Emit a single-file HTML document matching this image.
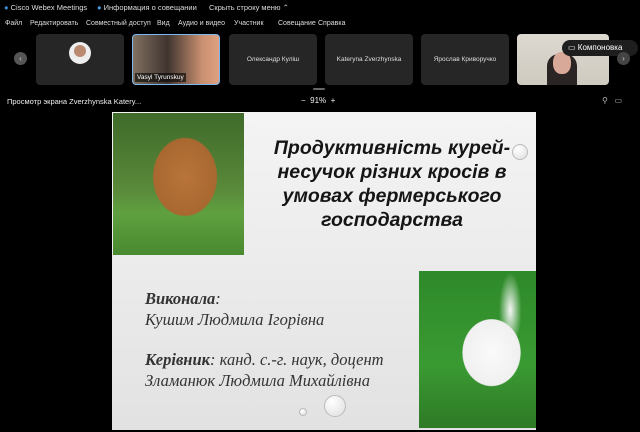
<!DOCTYPE html>
<html><head><meta charset="utf-8"><style>
*{margin:0;padding:0;box-sizing:border-box}
body{width:640px;height:432px;background:#000;overflow:hidden;position:relative;font-family:"Liberation Sans",sans-serif;color:#ddd}
.t{position:absolute;white-space:nowrap}
.m{position:absolute;top:20px;font-size:7px;white-space:nowrap;color:#ddd}
.tile{position:absolute;top:34px;height:51px;width:88px;background:#262626;border-radius:4px;font-size:6.5px;color:#ddd;display:flex;align-items:center;justify-content:center}
.slide{position:absolute;left:112px;top:112px;width:424px;height:318px;background:linear-gradient(180deg,#f4f4f4,#e2e2e2)}
.ti{position:absolute;left:140px;top:24px;width:280px;text-align:center;font-weight:bold;font-style:italic;font-size:19.5px;line-height:24px;color:#151515}
.sr{font-family:"Liberation Serif",serif;font-style:italic;font-size:16.5px;color:#333}
.bub{position:absolute;border-radius:50%;border:1px solid #bbb;background:radial-gradient(circle at 35% 30%,#fff,#ddd)}
</style></head><body>
<div class="t" style="left:4px;top:3px;font-size:7.5px;color:#ddd"><span style="color:#3a8fd8">●</span> Cisco Webex Meetings</div>
<div class="t" style="left:97px;top:3px;font-size:7.5px"><span style="color:#4a9be0">●</span> Информация о совещании</div>
<div class="t" style="left:209px;top:3px;font-size:7.5px">Скрыть строку меню ⌃</div>
<div class="m" style="left:5px">Файл</div><div class="m" style="left:30px">Редактировать</div><div class="m" style="left:86px">Совместный доступ</div><div class="m" style="left:157px">Вид</div><div class="m" style="left:178px">Аудио и видео</div><div class="m" style="left:234px">Участник</div><div class="m" style="left:278px">Совещание</div><div class="m" style="left:318px">Справка</div>
<div style="position:absolute;left:14px;top:52px;width:13px;height:13px;border-radius:50%;background:#555;color:#ccc;font-size:8px;text-align:center;line-height:13px">‹</div>
<div class="tile" style="left:36px"><div style="width:22px;height:22px;border-radius:50%;background:#eee;margin-top:-14px;overflow:hidden"><div style="width:12px;height:12px;background:#b98a70;border-radius:50%;margin:3px auto 0"></div></div></div>
<div class="tile" style="left:132px;border:1px solid #7ab8f0;background:linear-gradient(90deg,#807060,#403430 40%,#c89070 80%,#e0a080)"><div style="position:absolute;left:2px;bottom:2px;background:rgba(0,0,0,.6);padding:1px 2px;color:#fff">Vasyl Tyrunskuy</div></div>
<div class="tile" style="left:229px">Олександр Куліш</div>
<div class="tile" style="left:325px">Kateryna Zverzhynska</div>
<div class="tile" style="left:421px">Ярослав Криворучко</div>
<div class="tile" style="left:517px;width:92px;background:linear-gradient(180deg,#ddd8d0,#cfcac0)"><div style="position:absolute;left:30px;top:20px;width:30px;height:31px;background:#2a2424;border-radius:12px 12px 0 0"></div><div style="position:absolute;left:36px;top:18px;width:18px;height:22px;background:#d8a898;border-radius:45%"></div></div>
<div class="t" style="left:562px;top:40px;height:16px;width:76px;background:#1e1e1e;border-radius:8px;font-size:8px;color:#fff;line-height:16px;padding-left:6px">▭ Компоновка</div>
<div style="position:absolute;left:617px;top:52px;width:13px;height:13px;border-radius:50%;background:#444;color:#ccc;font-size:8px;text-align:center;line-height:13px">›</div>
<div style="position:absolute;left:313px;top:88px;width:12px;height:2px;background:#666;border-radius:1px"></div>
<div class="t" style="left:7px;top:97px;font-size:7.5px;color:#eee">Просмотр экрана Zverzhynska Katery...</div>
<div class="t" style="left:301px;top:96px;font-size:8px;color:#eee">−&nbsp; 91%&nbsp; +</div>
<div class="t" style="left:602px;top:96px;font-size:8px;color:#bbb">⚲&nbsp;&nbsp; ▭</div>
<div class="slide">
 <div style="position:absolute;left:1px;top:1px;width:131px;height:142px;background:radial-gradient(ellipse 40% 45% at 55% 45%,#b8743a,#a86830 60%,transparent 62%),linear-gradient(180deg,#3f6a2a 0%,#5a8a3a 55%,#5fa040 70%,#4a8a30)"></div>
 <div class="ti">Продуктивність курей-<br>несучок різних кросів в<br>умовах фермерського<br>господарства</div>
 <div class="t sr" style="left:33px;top:177px"><b>Виконала</b>:</div>
 <div class="t sr" style="left:33px;top:198px">Кушим Людмила Ігорівна</div>
 <div class="t sr" style="left:33px;top:238px"><b>Керівник</b>: канд. с.-г. наук, доцент</div>
 <div class="t sr" style="left:33px;top:259px">Зламанюк Людмила Михайлівна</div>
 <div style="position:absolute;left:307px;top:159px;width:117px;height:157px;background:radial-gradient(ellipse 35% 30% at 62% 52%,#fafafa,#f0f0f0 70%,transparent 72%),radial-gradient(ellipse 12% 30% at 78% 25%,#f5f5f5,transparent 80%),linear-gradient(180deg,#2e8a2a,#3a9a32 60%,#2e7a26)"></div>
 <div class="bub" style="left:212px;top:283px;width:22px;height:22px"></div>
 <div class="bub" style="left:187px;top:296px;width:8px;height:8px"></div>
 <div class="bub" style="left:400px;top:32px;width:16px;height:16px"></div>
</div>
</body></html>
